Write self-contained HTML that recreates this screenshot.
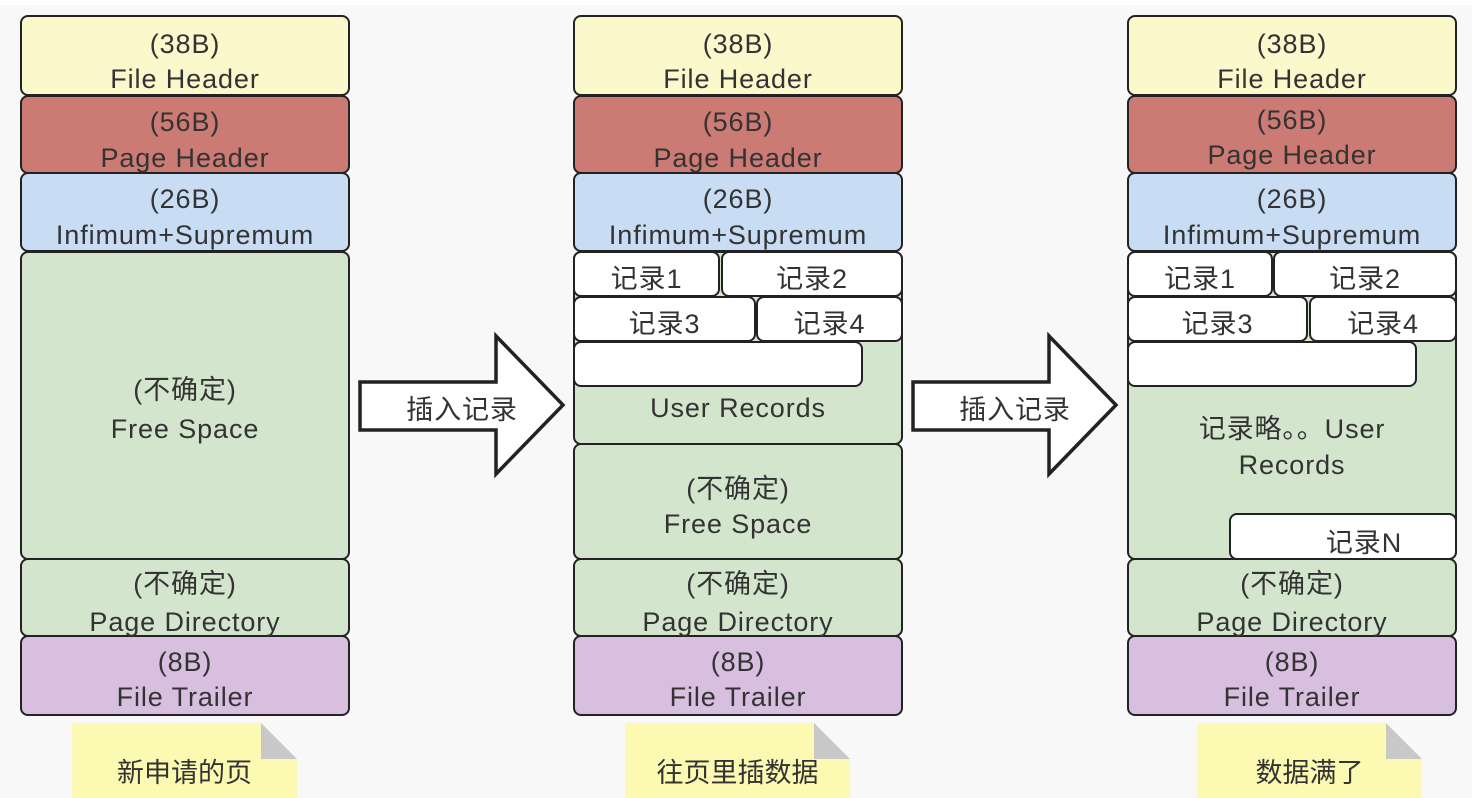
<!DOCTYPE html>
<html><head><meta charset="utf-8"><style>
html,body{margin:0;padding:0}
body{width:1472px;height:798px;background:#f8f8f8;position:relative;overflow:hidden;font-family:"Liberation Sans","Noto Sans CJK SC",sans-serif;color:#333}
.top{position:absolute;left:0;top:0;width:1472px;height:5px;background:#fff}
.b{position:absolute;border:2.5px solid #222;border-radius:8px;box-sizing:border-box}
.y{background:#fbf8cc}.r{background:#cc7a74}.bl{background:#c8dcf3}.g{background:#d3e6cd}.p{background:#d8bfe0}.w{background:#fff}
.t{position:absolute;text-align:center;font-size:27px;letter-spacing:0.9px;line-height:26px;white-space:nowrap}
.note{position:absolute;top:723px;width:225px;height:75px;background:#fcf9b2}
.note .f{position:absolute;right:0;top:0;width:0;height:0;border-style:solid;border-width:0 36px 36px 0;border-color:transparent #f8f8f8 #c8c8c8 transparent}
.note .nt{position:absolute;left:0;width:225px;top:28px;text-align:center;font-size:27px;color:#333}
</style></head><body>
<div class="top"></div>

<!-- column 1 -->
<div class="b y" style="left:20px;top:15px;width:330px;height:81px"></div>
<div class="b r" style="left:20px;top:95px;width:330px;height:79px"></div>
<div class="b bl" style="left:20px;top:172px;width:330px;height:80px"></div>
<div class="b g" style="left:20px;top:251px;width:330px;height:309px"></div>
<div class="b g" style="left:20px;top:558px;width:330px;height:79px"></div>
<div class="b p" style="left:20px;top:635px;width:330px;height:81px"></div>
<div class="t" style="left:20px;width:330px;top:31px">(38B)</div>
<div class="t" style="left:20px;width:330px;top:66px">File Header</div>
<div class="t" style="left:20px;width:330px;top:109px">(56B)</div>
<div class="t" style="left:20px;width:330px;top:145px">Page Header</div>
<div class="t" style="left:20px;width:330px;top:186px">(26B)</div>
<div class="t" style="left:20px;width:330px;top:222px">Infimum+Supremum</div>
<div class="t" style="left:20px;width:330px;top:377px">(不确定)</div>
<div class="t" style="left:20px;width:330px;top:416px">Free Space</div>
<div class="t" style="left:20px;width:330px;top:571px">(不确定)</div>
<div class="t" style="left:20px;width:330px;top:609px">Page Directory</div>
<div class="t" style="left:20px;width:330px;top:649px">(8B)</div>
<div class="t" style="left:20px;width:330px;top:684px">File Trailer</div>

<!-- arrows -->
<svg style="position:absolute;left:355px;top:330px" width="215" height="150"><polygon points="5,52 141,52 141,6 208,75 141,144 141,100 5,100" fill="#fff" stroke="#222" stroke-width="3.5"/></svg>
<div class="t" style="left:382px;width:160px;top:397px">插入记录</div>
<svg style="position:absolute;left:908px;top:330px" width="215" height="150"><polygon points="5,52 141,52 141,6 208,75 141,144 141,100 5,100" fill="#fff" stroke="#222" stroke-width="3.5"/></svg>
<div class="t" style="left:935px;width:160px;top:397px">插入记录</div>

<!-- column 2 -->
<div class="b y" style="left:573px;top:15px;width:330px;height:81px"></div>
<div class="b r" style="left:573px;top:95px;width:330px;height:79px"></div>
<div class="b bl" style="left:573px;top:172px;width:330px;height:80px"></div>
<div class="b g" style="left:573px;top:251px;width:330px;height:194px"></div>
<div class="b w" style="left:573px;top:251px;width:147px;height:46px"></div>
<div class="b w" style="left:721px;top:251px;width:182px;height:46px"></div>
<div class="b w" style="left:573px;top:296px;width:183px;height:46px"></div>
<div class="b w" style="left:756px;top:296px;width:147px;height:46px"></div>
<div class="b w" style="left:573px;top:341px;width:290px;height:46px"></div>
<div class="b g" style="left:573px;top:443px;width:330px;height:117px"></div>
<div class="b g" style="left:573px;top:558px;width:330px;height:79px"></div>
<div class="b p" style="left:573px;top:635px;width:330px;height:81px"></div>
<div class="t" style="left:573px;width:330px;top:31px">(38B)</div>
<div class="t" style="left:573px;width:330px;top:66px">File Header</div>
<div class="t" style="left:573px;width:330px;top:109px">(56B)</div>
<div class="t" style="left:573px;width:330px;top:145px">Page Header</div>
<div class="t" style="left:573px;width:330px;top:186px">(26B)</div>
<div class="t" style="left:573px;width:330px;top:222px">Infimum+Supremum</div>
<div class="t" style="left:573px;width:147px;top:266px">记录1</div>
<div class="t" style="left:721px;width:182px;top:266px">记录2</div>
<div class="t" style="left:573px;width:183px;top:311px">记录3</div>
<div class="t" style="left:756px;width:147px;top:311px">记录4</div>
<div class="t" style="left:573px;width:330px;top:395px">User Records</div>
<div class="t" style="left:573px;width:330px;top:476px">(不确定)</div>
<div class="t" style="left:573px;width:330px;top:511px">Free Space</div>
<div class="t" style="left:573px;width:330px;top:571px">(不确定)</div>
<div class="t" style="left:573px;width:330px;top:609px">Page Directory</div>
<div class="t" style="left:573px;width:330px;top:649px">(8B)</div>
<div class="t" style="left:573px;width:330px;top:684px">File Trailer</div>

<!-- column 3 -->
<div class="b y" style="left:1127px;top:15px;width:330px;height:81px"></div>
<div class="b r" style="left:1127px;top:95px;width:330px;height:79px"></div>
<div class="b bl" style="left:1127px;top:172px;width:330px;height:80px"></div>
<div class="b g" style="left:1127px;top:251px;width:330px;height:309px"></div>
<div class="b w" style="left:1127px;top:251px;width:146px;height:46px"></div>
<div class="b w" style="left:1273px;top:251px;width:184px;height:46px"></div>
<div class="b w" style="left:1127px;top:296px;width:181px;height:46px"></div>
<div class="b w" style="left:1309px;top:296px;width:148px;height:46px"></div>
<div class="b w" style="left:1127px;top:341px;width:290px;height:46px"></div>
<div class="b w" style="left:1229px;top:513px;width:228px;height:47px"></div>
<div class="b g" style="left:1127px;top:558px;width:330px;height:79px"></div>
<div class="b p" style="left:1127px;top:635px;width:330px;height:81px"></div>
<div class="t" style="left:1127px;width:330px;top:31px">(38B)</div>
<div class="t" style="left:1127px;width:330px;top:66px">File Header</div>
<div class="t" style="left:1127px;width:330px;top:107px">(56B)</div>
<div class="t" style="left:1127px;width:330px;top:142px">Page Header</div>
<div class="t" style="left:1127px;width:330px;top:186px">(26B)</div>
<div class="t" style="left:1127px;width:330px;top:222px">Infimum+Supremum</div>
<div class="t" style="left:1127px;width:146px;top:266px">记录1</div>
<div class="t" style="left:1273px;width:184px;top:266px">记录2</div>
<div class="t" style="left:1127px;width:181px;top:311px">记录3</div>
<div class="t" style="left:1309px;width:148px;top:311px">记录4</div>
<div class="t" style="left:1127px;width:330px;top:416px">记录略。。User</div>
<div class="t" style="left:1127px;width:330px;top:452px">Records</div>
<div class="t" style="left:1250px;width:228px;top:530px">记录N</div>
<div class="t" style="left:1127px;width:330px;top:571px">(不确定)</div>
<div class="t" style="left:1127px;width:330px;top:609px">Page Directory</div>
<div class="t" style="left:1127px;width:330px;top:649px">(8B)</div>
<div class="t" style="left:1127px;width:330px;top:684px">File Trailer</div>

<!-- notes -->
<div class="note" style="left:72px"><div class="f"></div><div class="nt">新申请的页</div></div>
<div class="note" style="left:625px"><div class="f"></div><div class="nt">往页里插数据</div></div>
<div class="note" style="left:1197px"><div class="f"></div><div class="nt">数据满了</div></div>
</body></html>
